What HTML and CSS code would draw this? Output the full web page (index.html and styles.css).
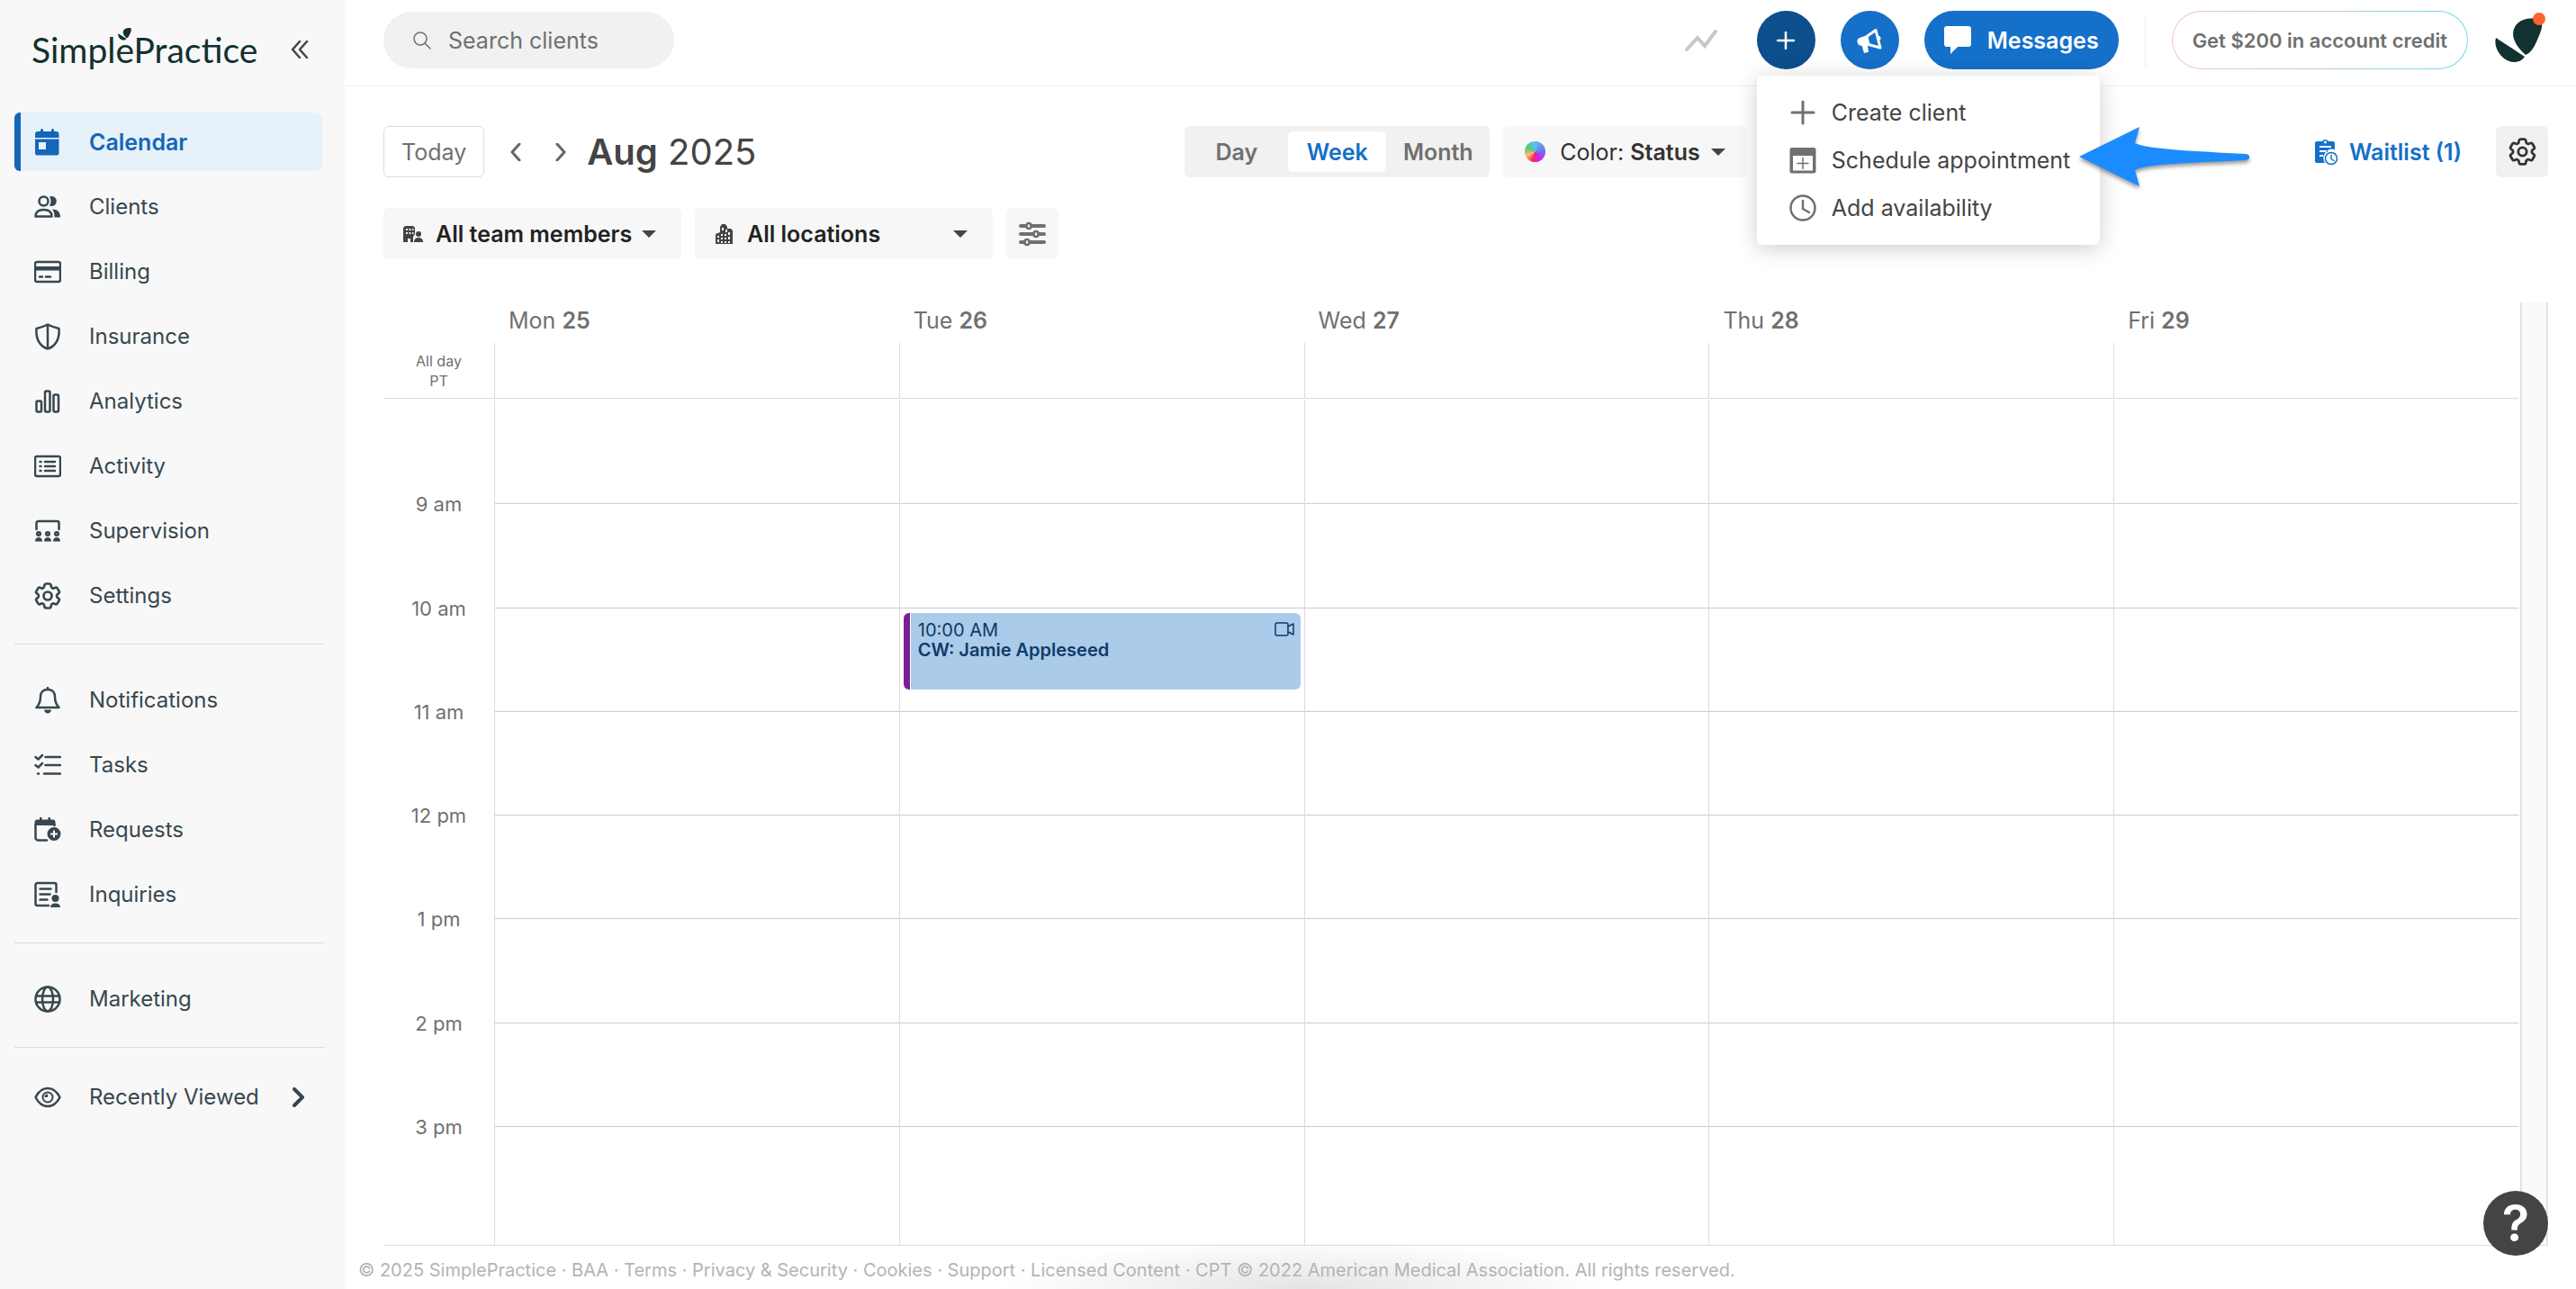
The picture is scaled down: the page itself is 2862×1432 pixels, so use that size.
FILE: index.html
```html
<!DOCTYPE html>
<html lang="en">
<head>
  <meta charset="UTF-8">
  <meta name="viewport" content="width=device-width, initial-scale=1.0">
  <title>SimplePractice</title>
  <link rel="stylesheet" href="styles.css">
</head>
<body>

<div class="app">

  <aside class="sidebar">
    <div class="brand">
      <a class="logo" href="#">SimplePractice
        <svg class="logo-leaf" viewBox="0 0 56 50"><path d="M34 41 C22 30 17 20 22 10 C27 1 39 -1 50 1 C53 2 53 10 50 17 C46 27 42 38 34 41 Z M1 22 L33 43 C28 51 16 51 8 43 C2 37 -1 29 1 22 Z"/></svg>
      </a>
      <button class="collapse" aria-label="Collapse menu">
        <svg width="20" height="20" viewBox="0 0 20 20" class="line"><path d="M10 1 L2 10 L10 19 M18 1 L10 10 L18 19"/></svg>
      </button>
    </div>

    <nav class="menu">
      <a class="item active" href="#">
        <svg class="icon" viewBox="0 0 30 30"><path d="M1 10V6a3 3 0 0 1 3-3h3V1.500a1.500 1.500 0 0 1 3 0V3h9V1.500a1.500 1.500 0 0 1 3 0V3h3a3 3 0 0 1 2.500 3v4z M1 11.500h26.500V27a2.500 2.500 0 0 1-2.500 2.500H3.500A2.500 2.500 0 0 1 1 27z M5 15v8h8v-8z" fill-rule="evenodd"/></svg>
        Calendar
      </a>
      <a class="item" href="#">
        <svg class="icon" viewBox="0 0 30 30"><g class="line"><circle cx="10.500" cy="8.500" r="5"/><path d="M1.500 25.500c0-5 3.500-7.500 9-7.500s9 2.500 9 7.500z"/></g><path d="M17 3.500a5.500 5.500 0 1 1 0 10c2-3 2-7 0-10z M20 17.500c6 0 9 3 9 9h-6.500c0-4-.5-6.500-2.500-9z"/></svg>
        Clients
      </a>
      <a class="item" href="#">
        <svg class="icon" viewBox="0 0 30 30"><g class="line"><rect x="1" y="4" width="28" height="22" rx="2"/><path d="M6 20.500h3 M13 20.500h5"/></g><path d="M1 9h28v4.500H1z"/></svg>
        Billing
      </a>
      <a class="item" href="#">
        <svg class="icon line" viewBox="0 0 30 30"><path d="M15 1.500c4 2 8 3.500 12.500 4.500C28.500 17 24 26 15 28.500 6 26 1.500 17 2.500 6 7 5 11 3.500 15 1.500z M15 2v26"/></svg>
        Insurance
      </a>
      <a class="item" href="#">
        <svg class="icon line" viewBox="0 0 30 30"><rect x="2.500" y="14.500" width="5.500" height="12" rx="1.500"/><rect x="12" y="3.500" width="5.500" height="23" rx="1.500"/><rect x="21.500" y="7.500" width="5.500" height="19" rx="1.500"/></svg>
        Analytics
      </a>
      <a class="item" href="#">
        <svg class="icon line" viewBox="0 0 30 30"><rect x="1" y="4" width="28" height="22" rx="2"/><path d="M12 10h11 M12 15h11 M12 20h11 M6.500 10h1 M6.500 15h1 M6.500 20h1"/></svg>
        Activity
      </a>
      <a class="item" href="#">
        <svg class="icon" viewBox="0 0 30 30"><g class="line"><path d="M2.500 13V6a2 2 0 0 1 2-2h21a2 2 0 0 1 2 2v7"/><circle cx="5" cy="18" r="1.800"/><circle cx="15" cy="18" r="1.800"/><circle cx="25" cy="18" r="1.800"/></g><path d="M1 26.500c0-3 1.500-4.500 4-4.500s4 1.500 4 4.500z M11 26.500c0-3 1.500-4.500 4-4.500s4 1.500 4 4.500z M21 26.500c0-3 1.500-4.500 4-4.500s4 1.500 4 4.500z"/></svg>
        Supervision
      </a>
      <a class="item" href="#">
        <svg class="icon line cog" viewBox="2 2 20 20"><path d="M9.594 3.940c.09-.542.56-.94 1.110-.94h2.593c.55 0 1.020.398 1.110.94l.213 1.281c.063.374.313.686.645.87.074.04.147.083.22.127.325.196.72.257 1.075.124l1.217-.456a1.125 1.125 0 0 1 1.370.49l1.296 2.247a1.125 1.125 0 0 1-.26 1.431l-1.003.827c-.293.241-.438.613-.43.992a7.723 7.723 0 0 1 0 .255c-.008.378.137.75.43.991l1.004.827c.424.35.534.955.26 1.430l-1.298 2.247a1.125 1.125 0 0 1-1.369.491l-1.217-.456c-.355-.133-.75-.072-1.076.124a6.470 6.470 0 0 1-.22.128c-.331.183-.581.495-.644.869l-.213 1.281c-.09.543-.56.94-1.110.94h-2.594c-.55 0-1.019-.398-1.110-.94l-.213-1.281c-.062-.374-.312-.686-.644-.87a6.520 6.520 0 0 1-.22-.127c-.325-.196-.72-.257-1.076-.124l-1.217.456a1.125 1.125 0 0 1-1.369-.49l-1.297-2.247a1.125 1.125 0 0 1 .26-1.431l1.004-.827c.292-.24.437-.613.43-.991a6.932 6.932 0 0 1 0-.255c.007-.38-.138-.751-.43-.992l-1.004-.827a1.125 1.125 0 0 1-.26-1.430l1.297-2.247a1.125 1.125 0 0 1 1.370-.491l1.216.456c.356.133.751.072 1.076-.124.072-.044.146-.086.22-.128.332-.183.582-.495.644-.869l.214-1.280Z"/><circle cx="12" cy="12" r="3"/></svg>
        Settings
      </a>

      <hr class="rule">

      <a class="item" href="#">
        <svg class="icon" viewBox="0 0 30 30"><path class="line" d="M15 3C9 3 7 7 7 11c0 6-1.500 9-4.500 12h25C24.500 20 23 17 23 11c0-4-2-8-8-8z M15 1v2"/><path d="M11 25.500h8c-.5 2.500-2 4-4 4s-3.500-1.500-4-4z"/></svg>
        Notifications
      </a>
      <a class="item" href="#">
        <svg class="icon line" viewBox="0 0 30 30"><path d="M1.500 6l3 2.500L9 4 M1.500 15l3 2.500L9 13 M12.500 6H29 M12.500 15H29 M11 24.500h18 M4 24.500h1"/></svg>
        Tasks
      </a>
      <a class="item" href="#">
        <svg class="icon" viewBox="0 0 30 30"><path class="line" d="M1.500 9v14.500a3 3 0 0 0 3 3H14 M22.500 9v1"/><path d="M.5 10V6.500a3 3 0 0 1 3-3H6V1h2.500v2.500h7V1H18v2.500h2.500a3 3 0 0 1 3 3V10z"/><path d="M22 12a7.500 7.500 0 1 1 0 15 7.500 7.500 0 0 1 0-15z M21 15.500v3h-3v2h3v3h2v-3h3v-2h-3v-3z" fill-rule="evenodd"/></svg>
        Requests
      </a>
      <a class="item" href="#">
        <svg class="icon" viewBox="0 0 30 30"><path class="line" d="M16 27H3.500a2 2 0 0 1-2-2V4a2 2 0 0 1 2-2h19a2 2 0 0 1 2 2v8 M6.500 8.500h12 M6.500 14.500h11 M6.500 20.500h8"/><circle cx="23.500" cy="19" r="4"/><path d="M18 29c0-3 2-4.500 5.500-4.500S29 26 29 29z"/></svg>
        Inquiries
      </a>

      <hr class="rule">

      <a class="item" href="#">
        <svg class="icon line" viewBox="0 0 30 30"><circle cx="15" cy="15" r="13.500"/><ellipse cx="15" cy="15" rx="6" ry="13.500"/><path d="M2 11.500h26 M2 18.500h26"/></svg>
        Marketing
      </a>

      <hr class="rule tight">

      <button class="item">
        <svg class="icon" viewBox="0 0 30 30"><g class="line"><path d="M1.500 15C5 8 9.500 5 15 5s10 3 13.500 10C25 22 20.500 25 15 25S5 22 1.500 15z"/><circle cx="15" cy="15" r="5.500" stroke-width="2"/></g><path d="M15 11.500v3.500h-3.500a3.500 3.500 0 0 1 3.500-3.500z"/></svg>
        Recently Viewed
        <svg class="more line" width="14" height="22" viewBox="0 0 14 22"><path d="M2 2l9 9-9 9" stroke-width="4"/></svg>
      </button>
    </nav>
  </aside>

  <div class="page">
    <header class="topbar">
      <label class="search">
        <svg class="line" width="20" height="20" viewBox="0 0 20 20"><circle cx="8" cy="8" r="7" stroke-width="1.500"/><path d="M13 13l6 6" stroke-width="1.500"/></svg>
        <input type="text" placeholder="Search clients" aria-label="Search clients">
      </label>

      <div class="actions">
        <svg class="trend line" width="36" height="24" viewBox="0 0 36 24"><path d="M2 22L14 9l8 9L34 2" stroke-width="4" stroke-linejoin="miter"/></svg>
        <div class="add-wrap">
          <button class="round dark" aria-label="Add">
            <svg class="line" width="20" height="20" viewBox="0 0 20 20"><path d="M10 1v18 M1 10h18"/></svg>
          </button>
          <div class="add-menu">
            <button class="add-item">
              <svg class="line" width="30" height="30" viewBox="0 0 30 30"><path d="M15 3v24 M3 15h24" stroke-width="3"/></svg>
              Create client
            </button>
            <button class="add-item">
              <svg width="30" height="30" viewBox="0 0 30 30"><path d="M3 1h24a2.500 2.500 0 0 1 2.500 2.500V27a2.500 2.500 0 0 1-2.500 2.500H3A2.500 2.500 0 0 1 .5 27V3.500A2.500 2.500 0 0 1 3 1z M4 10v16.500h22V10z" fill-rule="evenodd"/><g class="line"><path d="M15 12.500v12 M9 18.500h12" stroke-width="1.500"/></g></svg>
              Schedule appointment
            </button>
            <button class="add-item">
              <svg class="line" width="30" height="30" viewBox="0 0 30 30"><circle cx="15" cy="15" r="13.500"/><path d="M15 7v9l7 4"/></svg>
              Add availability
            </button>
            <svg class="pointer" width="192" height="72" viewBox="0 0 192 72"><path d="M0 34 L67 1 L62 19 C76 26 130 28 184 31 C191 31 191 38 184 38 C130 41 78 41 62 49 L67 67 Z"/></svg>
          </div>
        </div>
        <button class="round" aria-label="Announcements">
          <svg width="28" height="28" viewBox="0 0 28 28"><g class="line"><path d="M11 9.500L21 2.500l5 19.500-13-3.500z" stroke-width="3"/></g><path d="M12 8L3 11c-2.500 1-3 3-2.200 5.500.8 2.500 2.500 3.500 4.700 3.200L8 28l5-1.200L12 20l1-.5z M23.500 8.500c3 .5 4 3.500 2 5.500z"/></svg>
        </button>
        <button class="messages">
          <svg width="30" height="31" viewBox="0 0 30 31"><path d="M3 0h24a3 3 0 0 1 3 3v17a3 3 0 0 1-3 3H15l-8 8v-8H3a3 3 0 0 1-3-3V3a3 3 0 0 1 3-3z"/></svg>
          Messages
        </button>
        <span class="split"></span>
        <button class="credit">Get $200 in account credit</button>
        <button class="avatar" aria-label="Account">
          <svg width="56" height="50" viewBox="0 0 56 50"><path d="M34 41 C22 30 17 20 22 10 C27 1 39 -1 50 1 C53 2 53 10 50 17 C46 27 42 38 34 41 Z M1 22 L33 43 C28 51 16 51 8 43 C2 37 -1 29 1 22 Z"/></svg>
          <span class="dot"></span>
        </button>
      </div>
    </header>

    <main class="content">
      <div class="toolbar">
        <div class="period">
          <button class="today">Today</button>
          <button class="arrow" aria-label="Previous week"><svg class="line" width="14" height="20" viewBox="0 0 14 20"><path d="M11 1L3 10l8 9" stroke-width="3"/></svg></button>
          <button class="arrow" aria-label="Next week"><svg class="line" width="14" height="20" viewBox="0 0 14 20"><path d="M3 1l8 9-8 9" stroke-width="3"/></svg></button>
          <h1 class="title"><b>Aug</b> 2025</h1>
        </div>
        <div class="views">
          <div class="segments">
            <button>Day</button>
            <button class="on">Week</button>
            <button>Month</button>
          </div>
          <button class="color">
            <span class="wheel"></span>
            <span>Color: <b>Status</b></span>
            <span class="caret"></span>
          </button>
        </div>
        <div class="tools">
          <a class="waitlist" href="#">
            <svg width="26" height="30" viewBox="0 0 26 30"><path d="M2 3h6a4 4 0 0 1 7 0h5a2 2 0 0 1 2 2v7a10 10 0 0 0-11 15H2a2 2 0 0 1-2-2V5a2 2 0 0 1 2-2z M5 8v2h13V8z M5 13v2h9v-2z M5 18v2h4v-2z M11.500 2.500a1.500 1.500 0 1 0 .01 0z" fill-rule="evenodd"/><g class="line"><circle cx="18" cy="22" r="6.500" stroke-width="1.500"/><path d="M18 18.500v4l3 2" stroke-width="1.500"/></g></svg>
            Waitlist (1)
          </a>
          <button class="gear" aria-label="Calendar settings">
            <svg class="line cog" width="31" height="31" viewBox="2 2 20 20"><path d="M9.594 3.940c.09-.542.56-.94 1.110-.94h2.593c.55 0 1.020.398 1.110.94l.213 1.281c.063.374.313.686.645.87.074.04.147.083.22.127.325.196.72.257 1.075.124l1.217-.456a1.125 1.125 0 0 1 1.370.49l1.296 2.247a1.125 1.125 0 0 1-.26 1.431l-1.003.827c-.293.241-.438.613-.43.992a7.723 7.723 0 0 1 0 .255c-.008.378.137.75.43.991l1.004.827c.424.35.534.955.26 1.430l-1.298 2.247a1.125 1.125 0 0 1-1.369.491l-1.217-.456c-.355-.133-.75-.072-1.076.124a6.470 6.470 0 0 1-.22.128c-.331.183-.581.495-.644.869l-.213 1.281c-.09.543-.56.94-1.110.94h-2.594c-.55 0-1.019-.398-1.110-.94l-.213-1.281c-.062-.374-.312-.686-.644-.87a6.520 6.520 0 0 1-.22-.127c-.325-.196-.72-.257-1.076-.124l-1.217.456a1.125 1.125 0 0 1-1.369-.49l-1.297-2.247a1.125 1.125 0 0 1 .26-1.431l1.004-.827c.292-.24.437-.613.43-.991a6.932 6.932 0 0 1 0-.255c.007-.38-.138-.751-.43-.992l-1.004-.827a1.125 1.125 0 0 1-.26-1.430l1.297-2.247a1.125 1.125 0 0 1 1.370-.491l1.216.456c.356.133.751.072 1.076-.124.072-.044.146-.086.22-.128.332-.183.582-.495.644-.869l.214-1.280Z"/><circle cx="12" cy="12" r="3"/></svg>
          </button>
        </div>
      </div>

      <div class="filters">
        <label class="filter">
          <svg width="22" height="20" viewBox="0 0 22 20"><path d="M0 3l2-2h9l2 2v7l-2 3v6H8v-4H5v4H0z M3 4v2h2V4z M6.500 4v2h2V4z M3 8v2h2V8z M6.500 8v2h2V8z M10 4v2h1.500V4z M10 8v2h1.500V8z" fill-rule="evenodd"/><circle cx="17" cy="10" r="3"/><path d="M12 19c0-3.500 2-5 5-5s5 1.500 5 5z"/></svg>
          <select aria-label="Team members"><option>All team members</option></select>
          <span class="caret"></span>
        </label>
        <label class="filter">
          <svg width="22" height="22" viewBox="-1 0 22 22"><path d="M0 22V11l5-2V3l2-3h4l2 3v2h4l2 2v15z M7 4v3h2V4z M11 6v3h2V6z M6 11v2h2v-2z M10 11v2h2v-2z M14 9v3h2V9z M6 15v2h2v-2z M10 15v2h2v-2z M14 14v3h2v-3z M2 13v2h2v-2z M2 17v3h2v-3z M6 19v2h2v-2z M10 19v2h2v-2z M14 19v2h2v-2z" fill-rule="evenodd"/></svg>
          <select aria-label="Locations"><option>All locations</option></select>
          <span class="caret"></span>
        </label>
        <button class="sliders" aria-label="More filters">
          <svg class="line" width="30" height="28" viewBox="0 0 30 28"><path d="M2 5h6 M14 5h14 M2 14h14 M22 14h6 M2 23h4 M12 23h16" stroke-width="4"/><circle cx="11" cy="5" r="3"/><circle cx="19" cy="14" r="3"/><circle cx="9" cy="23" r="3"/></svg>
        </button>
      </div>

      <section class="calendar">
        <div class="week">
          <div class="days">
            <span></span>
            <span>Mon <b>25</b></span>
            <span>Tue <b>26</b></span>
            <span>Wed <b>27</b></span>
            <span>Thu <b>28</b></span>
            <span>Fri <b>29</b></span>
          </div>
          <div class="all-day">
            <span class="all-day-label">All day<br>PT</span>
            <span></span><span></span><span></span><span></span><span></span>
          </div>
          <div class="grid">
            <div class="hours">
              <span>9 am</span>
              <span>10 am</span>
              <span>11 am</span>
              <span>12 pm</span>
              <span>1 pm</span>
              <span>2 pm</span>
              <span>3 pm</span>
            </div>
            <div class="column"><i></i><i></i><i></i><i></i><i></i><i></i><i></i></div>
            <div class="column">
              <i></i><i></i>
              <i>
                <button class="event">
                  <span class="event-text">10:00 AM<br><b>CW: Jamie Appleseed</b></span>
                  <svg class="line" width="22" height="16" viewBox="0 0 22 16"><rect x="1" y="1" width="14" height="14" rx="2" stroke-width="1.500"/><path d="M15 5l6-3v12l-6-3" stroke-width="1.500"/></svg>
                </button>
              </i>
              <i></i><i></i><i></i><i></i>
            </div>
            <div class="column"><i></i><i></i><i></i><i></i><i></i><i></i><i></i></div>
            <div class="column"><i></i><i></i><i></i><i></i><i></i><i></i><i></i></div>
            <div class="column"><i></i><i></i><i></i><i></i><i></i><i></i><i></i></div>
          </div>
        </div>
        <div class="gutter"></div>
      </section>
    </main>

    <footer class="footer">© 2025 SimplePractice · <a href="#">BAA</a> · <a href="#">Terms</a> · <a href="#">Privacy &amp; Security</a> · <a href="#">Cookies</a> · <a href="#">Support</a> · <a href="#">Licensed Content</a> · CPT © 2022 American Medical Association. All rights reserved.</footer>
  </div>

  <button class="help">?</button>
</div>

</body>
</html>
```
FILE: styles.css
```css
* {
  box-sizing: border-box;
}

body {
  margin: 0;
  font-family: Inter, "Liberation Sans", sans-serif;
  font-size: 25px;
  color: #444;
  background: #fff;
}

button, input, select {
  font: inherit;
  color: inherit;
  border: 0;
  padding: 0;
  background: none;
}

button {
  cursor: pointer;
}

a {
  color: inherit;
  text-decoration: none;
}

svg {
  flex: none;
  fill: currentColor;
}

.line {
  fill: none;
  stroke: currentColor;
  stroke-width: 2.5;
  stroke-linecap: round;
  stroke-linejoin: round;
}

.cog {
  stroke-width: 1.8;
}

b {
  font-weight: 600;
}

.app {
  display: flex;
  min-height: 100vh;
}

/* Sidebar */
.sidebar {
  flex: none;
  width: 383px;
  padding: 0 22px 0 16px;
  background: #f8f8f8;
  color: #37474f;
}

.brand {
  display: flex;
  align-items: center;
  justify-content: space-between;
  height: 125px;
  padding: 0 18px 16px 19px;
}

.logo {
  position: relative;
  font-family: Lato, sans-serif;
  font-size: 39px;
  line-height: 48px;
  color: #123130;
}

.logo-leaf {
  position: absolute;
  left: 96px;
  top: 0;
  width: 16px;
  height: 14px;
}

.collapse {
  display: flex;
  color: #444;
}

.menu {
  display: flex;
  flex-direction: column;
}

.item {
  display: flex;
  align-items: center;
  gap: 31px;
  height: 65px;
  margin-bottom: 7px;
  padding-left: 22px;
  margin-right: 3px;
  border-radius: 6px;
  font-size: 24px;
  text-align: left;
}

.item.active {
  padding-left: 15px;
  border-left: 7px solid #1466b8;
  background: #e6f1fa;
  color: #1466b8;
  font-size: 25px;
  font-weight: 600;
}

.icon {
  width: 30px;
  height: 30px;
}

.more {
  margin-left: 6px;
}

.rule {
  width: 100%;
  height: 1px;
  margin: 14px 0 29px;
  border: 0;
  background: #dcdcdc;
}

.rule.tight {
  margin-bottom: 22px;
}

/* Top bar */
.page {
  flex: 1;
  min-width: 0;
  display: flex;
  flex-direction: column;
}

.topbar {
  display: flex;
  align-items: center;
  justify-content: space-between;
  height: 96px;
  padding: 0 31px 6px 43px;
  border-bottom: 1px solid #eee;
}

.search {
  display: flex;
  align-items: center;
  gap: 19px;
  width: 323px;
  height: 63px;
  padding: 0 33px;
  border-radius: 32px;
  background: #f1f1f1;
  color: #707070;
}

.search input {
  width: 100%;
  outline: none;
}

.search input::placeholder {
  color: #707070;
  opacity: 1;
}

.actions {
  display: flex;
  align-items: center;
}

.trend {
  margin-right: 44px;
  color: #c8c8c8;
}

.round {
  display: flex;
  align-items: center;
  justify-content: center;
  width: 65px;
  height: 65px;
  margin-right: 28px;
  border-radius: 50%;
  background: #1470c8;
  color: #fff;
}

.round.dark {
  background: #0c4f8c;
}

.messages {
  display: flex;
  align-items: center;
  gap: 18px;
  height: 65px;
  padding: 0 22px;
  border-radius: 33px;
  background: #1470c8;
  color: #fff;
  font-weight: 600;
}

.split {
  width: 1px;
  height: 58px;
  margin: 0 29px;
  background: #eee;
}

.credit {
  height: 65px;
  padding: 0 22px;
  border: 1px solid transparent;
  border-radius: 33px;
  background: linear-gradient(#fff, #fff) padding-box, linear-gradient(90deg, #fbc4c8, #74d6ea) border-box;
  color: #707070;
  font-size: 22px;
  font-weight: 600;
}

.avatar {
  position: relative;
  display: flex;
  margin: 0 3px 0 30px;
  color: #123130;
}

.dot {
  position: absolute;
  top: -6px;
  right: 0;
  width: 14px;
  height: 14px;
  border-radius: 50%;
  background: #ff6130;
}

/* Menu under the plus button */
.add-wrap {
  position: relative;
}

.add-menu {
  position: absolute;
  top: 72px;
  left: 0;
  z-index: 2;
  width: 381px;
  padding: 14px 0 15px;
  border-radius: 6px;
  background: #fff;
  box-shadow: 0 4px 24px rgba(0, 0, 0, 0.2);
}

.add-item {
  display: flex;
  align-items: center;
  gap: 17px;
  width: 100%;
  height: 53px;
  padding-left: 36px;
  white-space: nowrap;
}

.add-item svg {
  color: #707070;
}

.pointer {
  position: absolute;
  left: 358px;
  top: 56px;
  color: #1a8cff;
  filter: drop-shadow(0 3px 2px rgba(0, 0, 0, 0.4));
}

/* Calendar toolbar */
.content {
  flex: 1;
  display: flex;
  flex-direction: column;
  padding: 44px 31px 0 43px;
}

.toolbar {
  display: grid;
  grid-template-columns: 1fr auto 1fr;
  align-items: center;
}

.period,
.views,
.tools {
  display: flex;
  align-items: center;
}

.today {
  height: 57px;
  padding: 0 19px;
  border: 1px solid #dcdcdc;
  border-radius: 6px;
  color: #707070;
}

.arrow {
  display: flex;
  margin-left: 28px;
  color: #666;
}

.arrow + .arrow {
  margin-left: 36px;
}

.title {
  margin: 0 0 0 22px;
  font-size: 40px;
  line-height: 48px;
  font-weight: 400;
}

.views {
  gap: 15px;
}

.segments {
  display: flex;
  height: 57px;
  padding: 6px 0;
  border-radius: 6px;
  background: #f1f1f1;
  color: #707070;
}

.segments button {
  width: 115px;
  border-radius: 6px;
  font-weight: 600;
}

.segments .on {
  width: 109px;
  background: #fff;
  color: #1470c8;
}

.color {
  display: flex;
  align-items: center;
  gap: 12px;
  height: 57px;
  padding: 0 24px;
  border-radius: 6px;
  background: #f7f7f7;
  color: #333;
}

.wheel {
  width: 23px;
  height: 23px;
  margin-right: 4px;
  border-radius: 50%;
  background: conic-gradient(#58c0f0, #6a70e8 25%, #e018e8 42%, #f03048 55%, #ffc070 68%, #58c878 82%, #58c0f0);
}

.caret {
  border: 8px solid transparent;
  border-top-color: #444;
  border-bottom: 0;
}

.tools {
  justify-content: flex-end;
  gap: 38px;
}

.waitlist {
  display: flex;
  align-items: center;
  gap: 12px;
  color: #1470c8;
  font-weight: 600;
}

.gear,
.sliders {
  display: flex;
  align-items: center;
  justify-content: center;
  width: 58px;
  height: 57px;
  border-radius: 6px;
  background: #f1f1f1;
  color: #333;
}

.sliders {
  background: #f7f7f7;
  color: #707070;
}

.filters {
  display: flex;
  gap: 15px;
  margin-top: 34px;
}

.filter {
  display: flex;
  align-items: center;
  gap: 14px;
  width: 331px;
  height: 57px;
  padding: 0 28px 0 22px;
  border-radius: 6px;
  background: #f7f7f7;
}

.filter svg {
  color: #444;
}

.filter select {
  flex: 1;
  min-width: 0;
  margin-right: -12px;
  appearance: none;
  color: #222;
  font-weight: 600;
}

/* Week view */
.calendar {
  flex: 1;
  display: flex;
  margin-top: 48px;
  border-bottom: 1px solid #dcdcdc;
}

.week {
  flex: 1;
  display: flex;
  flex-direction: column;
}

.days,
.all-day,
.grid {
  display: grid;
  grid-template-columns: 123px repeat(5, 1fr);
}

.days {
  height: 45px;
  line-height: 40px;
  color: #707070;
}

.days span {
  padding-left: 16px;
}

.all-day {
  height: 62px;
  border-bottom: 1px solid #dcdcdc;
}

.all-day span + span {
  border-left: 1px solid #dcdcdc;
}

.all-day-label {
  padding-top: 9px;
  color: #707070;
  font-size: 16px;
  line-height: 22px;
  text-align: center;
}

.grid {
  flex: 1;
  margin-top: 2px;
}

.hours,
.column {
  display: grid;
  grid-template-rows: repeat(8, 1fr);
  padding-bottom: 16px;
}

.hours {
  color: #707070;
  font-size: 22px;
  line-height: 28px;
  text-align: center;
}

.hours span {
  align-self: end;
  margin-bottom: -14px;
}

.column {
  border-left: 1px solid #dcdcdc;
}

.column i {
  border-bottom: 1px solid #ccc;
  font-style: normal;
}

.event {
  display: flex;
  justify-content: space-between;
  width: calc(100% - 8px);
  height: 85px;
  margin: 5px 4px;
  padding: 8px 7px 0 9px;
  border-left: 7px solid #7b1f96;
  border-radius: 6px;
  background: #aacbea;
  color: #0f3a66;
  font-size: 20px;
  line-height: 22px;
  text-align: left;
  box-shadow: inset 1px 0 #fff;
}

.event svg {
  margin-top: 2px;
}

.gutter {
  width: 31px;
  margin-left: 2px;
  border: solid #e4e4e4;
  border-width: 0 2px;
  background: #fafafa;
}

/* Footer */
.footer {
  height: 48px;
  padding: 12px 15px;
  background: radial-gradient(ellipse 340px 56px at 43% 100%, #e4e4e4, #fff);
  color: #b4b4b4;
  font-size: 20px;
  line-height: 30px;
}

.help {
  position: fixed;
  right: 31px;
  bottom: 37px;
  width: 72px;
  height: 72px;
  border-radius: 50%;
  background: #444;
  color: #fff;
  font-size: 56px;
  font-weight: 600;
  line-height: 72px;
}
```
